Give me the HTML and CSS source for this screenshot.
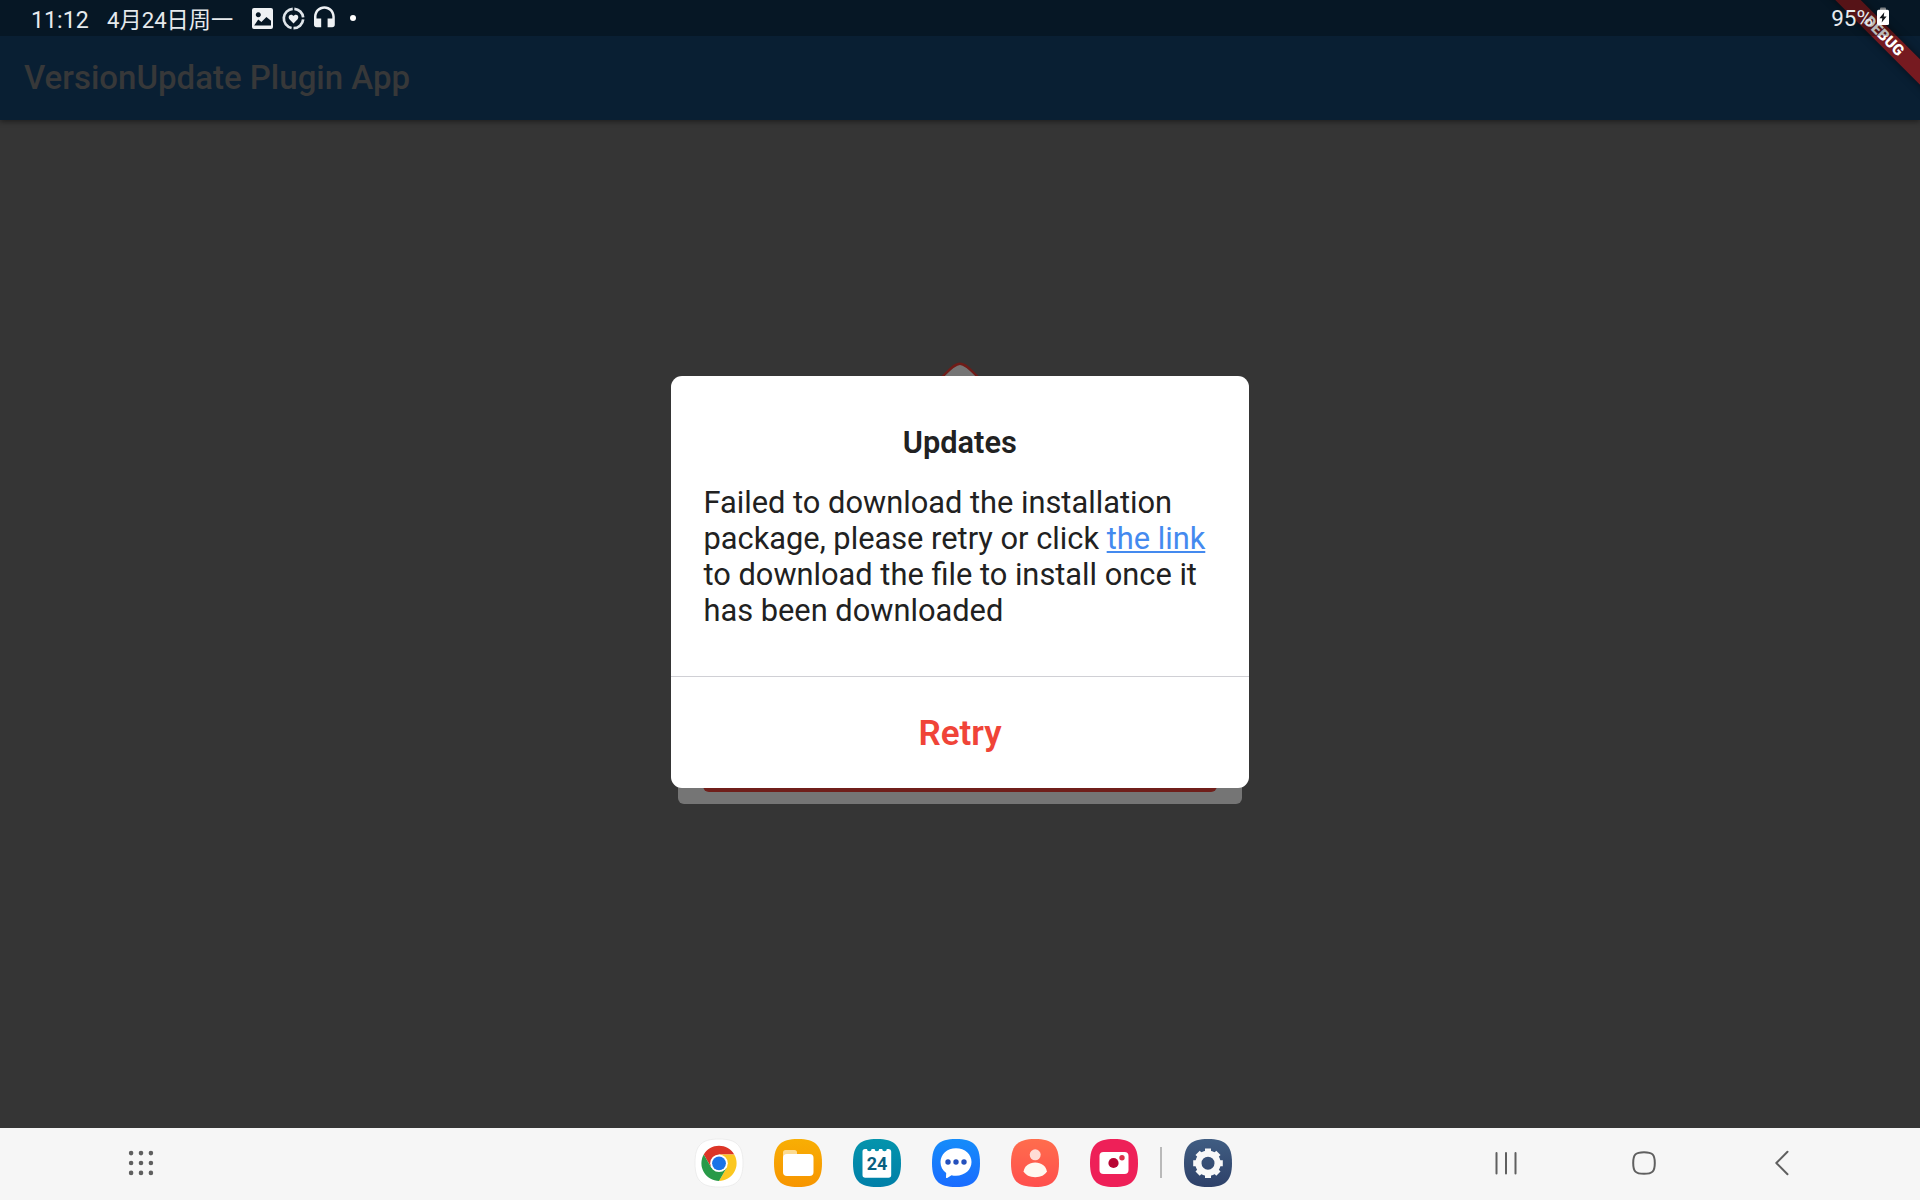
FILE: index.html
```
<!DOCTYPE html>
<html lang="en">
<head>
<meta charset="utf-8">
<title>VersionUpdate Plugin App</title>
<link rel="stylesheet" href="styles.css">
</head>
<body>
<div class="screen">
  <header class="status">
    <div class="status-left">
      <span class="clock">11:12</span>
      <span class="date" lang="zh-CN">4月24日周一</span>
      <svg class="status-icons" width="108" height="36" viewBox="0 0 108 36">
        <path fill="#eef1f4" fill-rule="evenodd" d="M3 8h16q2 0 2 2v17q0 2-2 2H2q-2 0-2-2V10q0-2 2-2zM6.3 12.2a2.5 2.5 0 1 0 .01 0zM2.2 25.4h16.8v-4.6l-4.6-3.9-5 5-3.2-2.4z"/>
        <g fill="none" stroke="#dfe5ea" stroke-width="2.7">
          <circle cx="41.5" cy="18.5" r="9.7" stroke-dasharray="13.2 2 14.2 2 27.5 2" transform="rotate(-85 41.5 18.5)"/>
        </g>
        <path fill="#eef1f4" d="M41.5 23.4l-4.1-4.2c-1.4-1.5-.7-4.2 1.5-4.4 1.2-.1 2 .5 2.6 1.3.6-.8 1.4-1.4 2.6-1.3 2.2.2 2.9 2.9 1.5 4.4z"/>
        <path fill="#eef1f4" d="M62 16.8C62 10.800 66.600 6.200 72.400 6.200S82.800 10.800 82.800 16.800V24.500q0 2.700-2.700 2.700h-4.500v-8.700h4.700v-1.700c0-4.500-3.500-8.100-7.900-8.100s-7.900 3.600-7.900 8.100v1.700h4.700v8.700h-4.500q-2.700 0-2.700-2.700z"/>
        <circle cx="101" cy="18" r="3" fill="#fff"/>
      </svg>
    </div>
    <div class="status-right">
      <span class="percent">95%</span>
      <svg class="battery" width="12" height="18" viewBox="0 0 12 18">
        <path fill="#7d8083" d="M3 3V1.500Q3 .5 4 .5H8Q9 .5 9 1.500V3z"/>
        <rect y="2.800" width="12" height="15.200" rx="1.500" fill="#fff"/>
        <path fill="#10151a" d="M7.300 5.200 2.400 11.200H5.300L4.700 15.600 9.600 9.500H6.700z"/>
      </svg>
    </div>
  </header>
  <div class="appbar">VersionUpdate Plugin App</div>
  <main class="stage">
    <div class="sheet">
      <svg class="sheet-tip" width="56" height="18" viewBox="0 0 56 18">
        <path d="M4 21C14 12 21 1.800 28 1.800S42 12 52 21z" fill="#757575" stroke="#6f1c18" stroke-width="2.400"/>
      </svg>
      <div class="sheet-card"><div class="sheet-button"></div></div>
    </div>
    <section class="dialog">
      <div class="dialog-body">
        <h1 class="dialog-title">Updates</h1>
        <p class="dialog-text">Failed to download the installation<br>package, please retry or click <a class="link">the link</a><br>to download the file to install once it<br>has been downloaded</p>
      </div>
      <button class="retry">Retry</button>
    </section>
  </main>
  <div class="banner-clip"><div class="banner">DEBUG</div></div>
  <div class="status-shade"></div>
  <footer class="taskbar">
    <svg class="apps" width="26" height="26" viewBox="-13 -13 26 26" fill="#5f5f5f">
      <circle cx="-9.900" cy="-9.900" r="2.300"/><circle cx="0" cy="-9.900" r="2.300"/><circle cx="9.900" cy="-9.900" r="2.300"/>
      <circle cx="-9.900" cy="0" r="2.300"/><circle cx="0" cy="0" r="2.300"/><circle cx="9.900" cy="0" r="2.300"/>
      <circle cx="-9.900" cy="9.900" r="2.300"/><circle cx="0" cy="9.900" r="2.300"/><circle cx="9.900" cy="9.900" r="2.300"/>
    </svg>
    <div class="dock">
      <svg class="app" viewBox="0 0 48 48">
        <defs>
          <path id="tile" d="M24 0C41.500 0 48 6.500 48 24S41.500 48 24 48 0 41.500 0 24 6.500 0 24 0Z"/>
          <linearGradient id="amber" x2="0" y2="1"><stop stop-color="#f8ae04"/><stop offset="1" stop-color="#f79500"/></linearGradient>
          <linearGradient id="teal" x2="0" y2="1"><stop stop-color="#0494ac"/><stop offset="1" stop-color="#007fa8"/></linearGradient>
          <linearGradient id="blue" x2="0" y2="1"><stop stop-color="#158cfa"/><stop offset="1" stop-color="#1a6cff"/></linearGradient>
          <linearGradient id="coral" x2="0" y2="1"><stop stop-color="#ff6d4d"/><stop offset="1" stop-color="#ff4f4d"/></linearGradient>
          <linearGradient id="navy" x2="0" y2="1"><stop stop-color="#405d82"/><stop offset="1" stop-color="#2e4169"/></linearGradient>
        </defs>
        <use href="#tile" fill="#fff" stroke="#e6e6e6" stroke-width=".7"/>
        <g transform="translate(24 24.300)">
          <path fill="#dc3527" d="M0-8.800H15.240A17.600 17.600 0 0 0-15.240-8.800L-7.620 4.400z"/>
          <path fill="#fbc720" d="M15.240-8.800A17.600 17.600 0 0 1 0 17.600L7.620 4.400 0-8.800z"/>
          <path fill="#289a48" d="M0 17.600A17.600 17.600 0 0 1-15.240-8.800L-7.620 4.400 7.620 4.400z"/>
          <circle r="8.800" fill="#fff"/><circle r="6.900" fill="#1a73e8"/>
        </g>
      </svg>
      <svg class="app" viewBox="0 0 48 48">
        <use href="#tile" fill="url(#amber)"/>
        <path fill="#fcdb92" d="M9 20V13.500Q9 11 11.500 11H20.500Q23 11 23 13.500V20z"/>
        <rect x="9" y="15" width="30.500" height="22" rx="4" fill="#fff"/>
      </svg>
      <svg class="app" viewBox="0 0 48 48">
        <use href="#tile" fill="url(#teal)"/>
        <path fill="#fff" d="M12 10h2a2.300 2.300 0 0 0 4.600 0h3a2.300 2.300 0 0 0 4.600 0h3a2.300 2.300 0 0 0 4.600 0h2Q38.200 10 38.200 12.500V36Q38.200 38.700 35.500 38.700H12.200Q9.500 38.700 9.500 36V12.500Q9.500 10 12 10z"/>
        <text class="day" x="24" y="31" text-anchor="middle">24</text>
      </svg>
      <svg class="app" viewBox="0 0 48 48">
        <use href="#tile" fill="url(#blue)"/>
        <path fill="#fff" d="M24 9.300C33 9.300 39.500 15.500 39.500 23S33 36.700 24 36.700Q21.500 36.700 19.500 36.200L15.200 39Q14 39.400 14 38.200L14.200 34C10.500 31.500 8.500 27.500 8.500 23 8.500 15.500 15 9.300 24 9.300z"/>
        <g fill="#2450bd"><circle cx="16" cy="23" r="2.700"/><circle cx="24" cy="23" r="2.700"/><circle cx="32" cy="23" r="2.700"/></g>
      </svg>
      <svg class="app" viewBox="0 0 48 48">
        <use href="#tile" fill="url(#coral)"/>
        <circle cx="24.200" cy="15.800" r="5.500" fill="#ffdcd6"/>
        <path fill="#fff8f0" d="M12.600 32.500C13.500 27 18 23.500 24.200 23.500S35 27 35.900 32.500C34 36 29.800 38.200 24.200 38.200S14.500 36 12.600 32.500z"/>
      </svg>
      <svg class="app" viewBox="0 0 48 48">
        <use href="#tile" fill="#ee2058"/>
        <rect x="9.500" y="13" width="29" height="22" rx="4" fill="#fff"/>
        <circle cx="23.500" cy="24" r="5.100" fill="#b80433"/><circle cx="32" cy="18.700" r="2.700" fill="#dc3048"/>
      </svg>
      <span class="dock-divider"></span>
      <svg class="app" viewBox="0 0 48 48">
        <use href="#tile" fill="url(#navy)"/>
        <g transform="translate(24 24.200)" stroke="#f8f8f8" fill="none">
          <path stroke-width="6" d="M0-14.800V-9M0 9V14.800M-14.800 0H-9M9 0H14.800M10.400-10.400 7-7M-10.400-10.400-7-7M10.400 10.400 7 7M-10.400 10.400-7 7"/>
          <circle r="9.600" stroke-width="6.200"/>
        </g>
      </svg>
    </div>
    <div class="nav">
      <svg width="24" height="26" viewBox="-12 -13 24 26" stroke="#5f5f5f" stroke-width="2" stroke-linecap="round"><path d="M-9.500-10V10.500M0-10V10.500M9.500-10V10.500"/></svg>
      <svg class="home" width="26" height="26" viewBox="-13 -13 26 26" fill="none" stroke="#5f5f5f" stroke-width="2"><path d="M0-10.800C8.500-10.800 10.800-8.500 10.800 0S8.500 10.800 0 10.800-10.800 8.500-10.800 0-8.500-10.800 0-10.800z"/></svg>
      <svg width="16" height="26" viewBox="-8 -13 16 26" fill="none" stroke="#5f5f5f" stroke-width="2" stroke-linecap="round" stroke-linejoin="round"><path d="M5.500-11.200-5.700 0 5.500 11.200"/></svg>
    </div>
  </footer>
</div>
</body>
</html>
```
FILE: styles.css
```
* { box-sizing: border-box; }
body { margin: 0; font-family: Roboto, "Noto Sans CJK SC", sans-serif; }
svg { display: block; flex: none; }

.screen {
  position: relative;
  display: flex;
  flex-direction: column;
  width: 1920px;
  height: 1200px;
  overflow: hidden;
  background: #353535;
}

/* status bar */
.status {
  position: relative;
  z-index: 4;
  flex: none;
  display: flex;
  justify-content: space-between;
  height: 36px;
  padding: 0 31px 0 31px;
  color: #e6eaed;
  font-size: 22.5px;
  line-height: 40px;
  white-space: nowrap;
}
.status-left, .status-right { display: flex; }
.clock { width: 76px; font-size: 23.2px; }
.date { width: 145px; font-size: 22.2px; }
.percent { margin-right: 4px; line-height: 36px; }
.battery { margin-top: 7px; }
.status-shade {
  position: absolute;
  z-index: 3;
  inset: 0 0 auto;
  height: 36px;
  background: rgba(0, 4, 0, .27);
}

/* app bar */
.appbar {
  position: relative;
  z-index: 1;
  flex: none;
  height: 120px;
  margin-top: -36px;
  padding: 36px 24px 0;
  background: #091f33;
  box-shadow: 0 2px 5px rgba(0, 0, 0, .4);
  color: #373839;
  font-size: 33px;
  font-weight: 500;
  line-height: 84px;
}

/* debug ribbon */
.banner-clip {
  position: absolute;
  z-index: 2;
  top: 0;
  right: 0;
  width: 160px;
  height: 160px;
  overflow: hidden;
}
.banner {
  position: absolute;
  left: 24.2px;
  top: 26.8px;
  width: 200px;
  height: 18px;
  transform: rotate(45deg);
  background: #761a20;
  box-shadow: 0 0 9px rgba(0, 0, 0, .5);
  color: #fff;
  font-size: 15.3px;
  font-weight: 900;
  line-height: 18px;
  text-align: center;
}

.stage {
  position: relative;
  flex: 1;
  display: flex;
  justify-content: center;
  align-items: flex-start;
  padding-top: 256px;
}

/* dimmed update sheet under the dialog */
.sheet {
  position: absolute;
  top: 242px;
  left: 678px;
  width: 564px;
  height: 442px;
  display: flex;
  flex-direction: column;
  justify-content: space-between;
  align-items: center;
}
.sheet-card {
  width: 100%;
  height: 60px;
  padding: 0 25px 12px;
  border-radius: 0 0 6px 6px;
  background: #757575;
}
.sheet-button { height: 100%; border-radius: 6px; background: #701f1b; }

/* dialog */
.dialog {
  position: relative;
  display: flex;
  flex-direction: column;
  width: 578px;
  height: 412px;
  border-radius: 11px;
  background: #fff;
  color: #212121;
  overflow: hidden;
}
.dialog-body { height: 300px; padding: 49px 20px 0 32.5px; }
.dialog-title {
  margin: 0 13px 24px 0;
  font-size: 30.75px;
  font-weight: 600;
  line-height: 36px;
  text-align: center;
}
.dialog-text {
  margin: 0;
  font-size: 30.8px;
  line-height: 36px;
  white-space: nowrap;
}
.link {
  color: #448aef;
  text-decoration: underline;
  text-decoration-thickness: 1.5px;
  text-underline-offset: 2px;
  text-decoration-skip-ink: none;
}
.retry {
  flex: 1;
  padding: 2px 0 0;
  border: 0;
  border-top: 1.5px solid #d0d0d5;
  background: none;
  color: #f04438;
  font: 600 35px/1 Roboto, sans-serif;
}

/* taskbar */
.taskbar {
  position: relative;
  flex: none;
  display: grid;
  grid-template-columns: 695.4px 1fr 426px;
  align-items: center;
  height: 72px;
  padding-bottom: 3px;
  background: #f6f6f6;
}
.apps { margin-left: 128px; }
.dock { display: flex; align-items: center; gap: 31px; }
.app { width: 48px; height: 48px; overflow: visible; }
.day { fill: #086080; font: 700 18px Roboto, sans-serif; }
.dock-divider {
  width: 2px;
  height: 31px;
  margin: 0 -9px 0 -9px;
  background: #b9b9b9;
}
.nav { display: flex; align-items: center; margin-top: 1px; }
.home { margin: 0 117.5px 0 112.5px; }
```
